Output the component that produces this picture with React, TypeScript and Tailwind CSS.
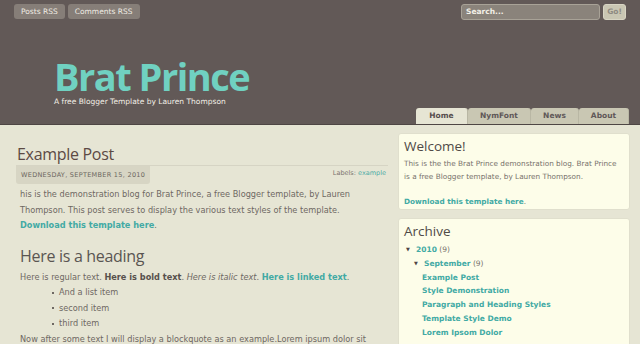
import React from "react";

// Brat Prince blogger template — header, post column and sidebar widgets

const ui = { fontFamily: '"DejaVu Sans", Verdana, sans-serif' };
const head = { fontFamily: '"Open Sans", "Noto Sans", sans-serif' };

const tabs = [
  { label: "Home", w: "w-[52px]", active: true },
  { label: "NymFont", w: "w-[63px]", active: false },
  { label: "News", w: "w-[48px]", active: false },
  { label: "About", w: "w-[50px]", active: false },
];

const posts = [
  "Example Post",
  "Style Demonstration",
  "Paragraph and Heading Styles",
  "Template Style Demo",
  "Lorem Ipsom Dolor",
];

const Header = () => (
  <header className="h-[125px] bg-[#625957] border-b border-[#4e4644] flex flex-col">
    <div className="flex justify-between items-start pt-[4px] pl-[14px] pr-[14px]" style={ui}>
      <div className="flex gap-[3px]">
        <span className="h-[15px] px-[7px] rounded-[3px] bg-[#867e78] text-[#efebe3] text-[7.5px] leading-[15px]">
          Posts RSS
        </span>
        <span className="h-[15px] px-[7px] rounded-[3px] bg-[#867e78] text-[#efebe3] text-[7.5px] leading-[15px]">
          Comments RSS
        </span>
      </div>
      <div className="flex gap-[3px]">
        <div className="w-[139px] h-[16px] rounded-[3px] bg-[#8a837b] border border-[#a8a297] text-[#f3f0e8] font-bold text-[7.5px] leading-[14px] px-[4px]">
          Search...
        </div>
        <div className="w-[23px] h-[16px] rounded-[3px] bg-[#c9c6b3] border border-[#d8d5c4] text-[#8e8a82] font-bold text-[7.5px] leading-[14px] text-center">
          Go!
        </div>
      </div>
    </div>
    <div className="pl-[54px] mt-[37px]">
      <h1
        className="text-[38px] leading-[38px] font-bold text-[#70d1c1] tracking-[-1.5px]"
        style={head}
      >
        Brat Prince
      </h1>
      <p className="text-[7.5px] leading-[8px] text-[#f3efe6] mt-[3px]" style={ui}>
        A free Blogger Template by Lauren Thompson
      </p>
    </div>
    <nav className="mt-auto flex justify-end pr-[11px]" style={ui}>
      {tabs.map((t) => (
        <span
          key={t.label}
          className={`${t.w} h-[16px] text-center text-[7.5px] leading-[16px] font-bold rounded-t-[3px] border-r border-[#b9b7a4] ${
            t.active ? "bg-[#e6e5d4] text-[#574e4e]" : "bg-[#c9c7b3] text-[#605858]"
          }`}
        >
          {t.label}
        </span>
      ))}
    </nav>
  </header>
);

const Post = () => (
  <main className="w-[372px] pt-[18px]">
    <h2
      className="text-[16px] leading-[22px] text-[#5c4a44] pl-[1px] border-b border-[#d6d4c4] tracking-[-0.3px]"
      style={head}
    >
      Example Post
    </h2>
    <div className="flex justify-between items-start" style={ui}>
      <span className="h-[18px] px-[5px] bg-[#d7d5c4] rounded-b-[3px] text-[6.5px] leading-[18px] text-[#6c6660] tracking-[0.3px]">
        WEDNESDAY, SEPTEMBER 15, 2010
      </span>
      <span className="text-[6.5px] leading-[14px] text-[#7a746e] pr-[2px]">
        Labels: <span className="text-[#4aaca6]">example</span>
      </span>
    </div>
    <div className="pl-[4px] text-[8.2px] leading-[15.5px] text-[#6e6863]" style={ui}>
      <p className="mt-[3px]">
        his is the demonstration blog for Brat Prince, a free Blogger template, by Lauren
        Thompson. This post serves to display the various text styles of the template.{" "}
        <br />
        <span className="font-bold text-[#42aaa4]">Download this template here</span>.
      </p>
      <h3
        className="text-[16px] leading-[20px] text-[#5a5552] mt-[12px] mb-[4px] tracking-[-0.3px]"
        style={head}
      >
        Here is a heading
      </h3>
      <p>
        Here is regular text. <b className="text-[#57504c]">Here is bold text</b>.{" "}
        <i>Here is italic text</i>.{" "}
        <span className="font-bold text-[#42aaa4]">Here is linked text</span>.
      </p>
      <ul className="pl-[32px]">
        {["And a list item", "second item", "third item"].map((li) => (
          <li key={li} className="flex items-center gap-[5px]">
            <span className="w-[2px] h-[2px] bg-[#6e6863]" />
            {li}
          </li>
        ))}
      </ul>
      <p>Now after some text I will display a blockquote as an example.Lorem ipsum dolor sit</p>
    </div>
  </main>
);

const Sidebar = () => (
  <aside className="w-[232px] pt-[8px] flex flex-col gap-[8px]" style={ui}>
    <section className="bg-[#fdfde9] rounded-[3px] border border-[#e0dfcd] px-[5px] pt-[3px] pb-[1px]">
      <h2 className="text-[13.5px] leading-[18px] text-[#4f4a47]" style={head}>
        Welcome!
      </h2>
      <p className="text-[7.3px] leading-[12.5px] text-[#77716b] mt-[3px] whitespace-nowrap">
        This is the the Brat Prince demonstration blog. Brat Prince
        <br />
        is a free Blogger template, by Lauren Thompson.
        <br />
        <br />
        <span className="font-bold text-[#42aaa4]">Download this template here</span>.
      </p>
    </section>
    <section className="bg-[#fdfde9] rounded-[3px] border border-[#e0dfcd] px-[5px] pt-[3px] h-[140px]">
      <h2 className="text-[13.5px] leading-[18px] text-[#4f4a47]" style={head}>
        Archive
      </h2>
      <div className="text-[7.5px] leading-[13.8px] font-bold text-[#42aaa4] mt-[3px]">
        <div className="pl-[2px] flex items-center">
          <span className="text-[5px] text-[#4f4545] w-[10px]">▼</span>
          2010<span className="font-normal text-[#77716b]">&nbsp;(9)</span>
        </div>
        <div className="pl-[10px] flex items-center">
          <span className="text-[5px] text-[#4f4545] w-[10px]">▼</span>
          September<span className="font-normal text-[#77716b]">&nbsp;(9)</span>
        </div>
        {posts.map((p) => (
          <div key={p} className="pl-[18px]">
            {p}
          </div>
        ))}
      </div>
    </section>
  </aside>
);

export default function App() {
  return (
    <div className="w-[640px] h-[344px] overflow-hidden bg-[#e6e5d4]">
      <Header />
      <div className="flex gap-[10px] pl-[16px]">
        <Post />
        <Sidebar />
      </div>
    </div>
  );
}
